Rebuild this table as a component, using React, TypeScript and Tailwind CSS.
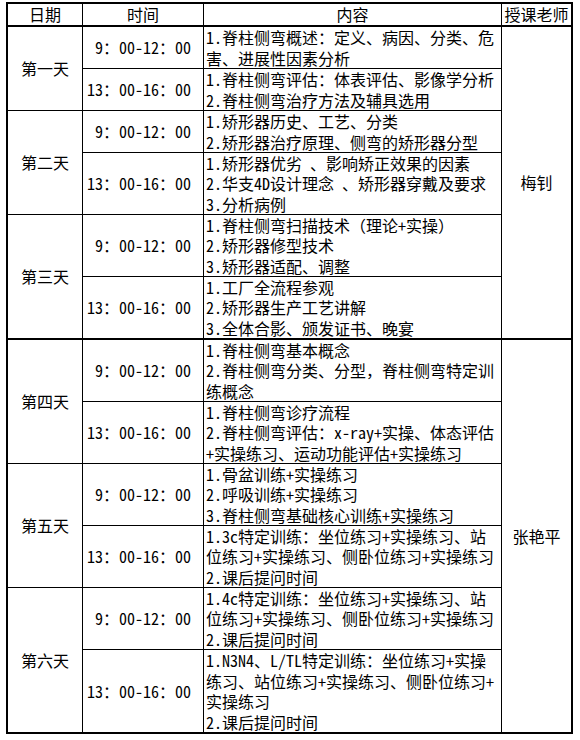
import React from "react";

interface ISession {
	time: string;
	lines: string[];
	shift?: boolean;
}

interface IDay {
	label: string;
	sessions: ISession[];
}

const days: IDay[] = [
	{
		label: "第一天",
		sessions: [
			{ time: "9：00-12：00", lines: ["1.脊柱侧弯概述：定义、病因、分类、危", "害、进展性因素分析"] },
			{ time: "13：00-16：00", shift: true, lines: ["1.脊柱侧弯评估：体表评估、影像学分析", "2.脊柱侧弯治疗方法及辅具选用"] },
		],
	},
	{
		label: "第二天",
		sessions: [
			{ time: "9：00-12：00", lines: ["1.矫形器历史、工艺、分类", "2.矫形器治疗原理、侧弯的矫形器分型"] },
			{
				time: "13：00-16：00",
				shift: true,
				lines: ["1.矫形器优劣 、影响矫正效果的因素", "2.华支4D设计理念 、矫形器穿戴及要求", "3.分析病例"],
			},
		],
	},
	{
		label: "第三天",
		sessions: [
			{ time: "9：00-12：00", lines: ["1.脊柱侧弯扫描技术（理论+实操）", "2.矫形器修型技术", "3.矫形器适配、调整"] },
			{ time: "13：00-16：00", shift: true, lines: ["1.工厂全流程参观", "2.矫形器生产工艺讲解", "3.全体合影、颁发证书、晚宴"] },
		],
	},
	{
		label: "第四天",
		sessions: [
			{ time: "9：00-12：00", lines: ["1.脊柱侧弯基本概念", "2.脊柱侧弯分类、分型，脊柱侧弯特定训", "练概念"] },
			{
				time: "13：00-16：00",
				shift: true,
				lines: ["1.脊柱侧弯诊疗流程", "2.脊柱侧弯评估：x-ray+实操、体态评估", "+实操练习、运动功能评估+实操练习"],
			},
		],
	},
	{
		label: "第五天",
		sessions: [
			{ time: "9：00-12：00", lines: ["1.骨盆训练+实操练习", "2.呼吸训练+实操练习", "3.脊柱侧弯基础核心训练+实操练习"] },
			{
				time: "13：00-16：00",
				shift: true,
				lines: ["1.3c特定训练：坐位练习+实操练习、站", "位练习+实操练习、侧卧位练习+实操练习", "2.课后提问时间"],
			},
		],
	},
	{
		label: "第六天",
		sessions: [
			{
				time: "9：00-12：00",
				lines: ["1.4c特定训练：坐位练习+实操练习、站", "位练习+实操练习、侧卧位练习+实操练习", "2.课后提问时间"],
			},
			{
				time: "13：00-16：00",
				shift: true,
				lines: ["1.N3N4、L/TL特定训练：坐位练习+实操", "练习、站位练习+实操练习、侧卧位练习+", "实操练习", "2.课后提问时间"],
			},
		],
	},
];

const teachers = [
	{ name: "梅钊", from: 0, to: 2 },
	{ name: "张艳平", from: 3, to: 5 },
];

// day index 2 is the block with the thick rule under it
const thickAfter = 2;

const App: React.FC = () => {
	const cells: React.ReactNode[] = [];

	days.forEach((day, dIdx) => {
		const thick = dIdx === thickAfter;
		const last = dIdx === days.length - 1;
		const bottom = last ? "" : thick ? "border-b-2" : "border-b";

		cells.push(
			<div
				key={`d${dIdx}`}
				className={`col-start-1 row-span-2 flex items-center justify-center border-r border-black ${bottom}`}
			>
				{day.label}
			</div>,
		);

		day.sessions.forEach((s, sIdx) => {
			const rowBottom = sIdx === 0 ? "border-b" : bottom;
			cells.push(
				<div
					key={`t${dIdx}-${sIdx}`}
					className={`col-start-2 flex items-center border-r border-black ${rowBottom} ${
						s.shift ? "justify-start pl-[4px]" : "justify-center"
					}`}
				>
					{s.time}
				</div>,
			);
			cells.push(
				<div
					key={`c${dIdx}-${sIdx}`}
					className={`col-start-3 flex flex-col justify-center whitespace-nowrap border-r border-black pl-[2px] ${rowBottom}`}
				>
					{s.lines.map((l, i) => (
						<span key={i}>{l}</span>
					))}
				</div>,
			);

			const teacher = teachers.find((t) => t.from === dIdx && sIdx === 0);
			if (teacher) {
				cells.push(
					<div
						key={`p${dIdx}`}
						className={`col-start-4 row-span-6 flex items-center justify-center ${
							teacher.to === thickAfter ? "border-b-2" : ""
						} border-black`}
					>
						{teacher.name}
					</div>,
				);
			}
		});
	});

	return (
		<div className="min-h-[740px] w-[580px] bg-white pl-[6px] pt-[2px] font-['Noto_Sans_Mono_CJK_SC','Noto_Sans_CJK_SC',sans-serif] text-[16px] leading-[20.5px] text-black">
			<div className="grid w-[567px] grid-cols-[75px_121px_298px_69px] grid-rows-[23px_42px_42px_42px_62px_62px_63px_62px_62px_62px_62px_62px_82px] border-2 border-black">
				<div className="flex items-center justify-center border-b-2 border-r border-black">日期</div>
				<div className="flex items-center justify-center border-b-2 border-r border-black">时间</div>
				<div className="flex items-center justify-center border-b-2 border-r border-black">内容</div>
				<div className="flex items-center justify-center border-b-2 border-black">授课老师</div>
				{cells}
			</div>
		</div>
	);
};

export default App;
